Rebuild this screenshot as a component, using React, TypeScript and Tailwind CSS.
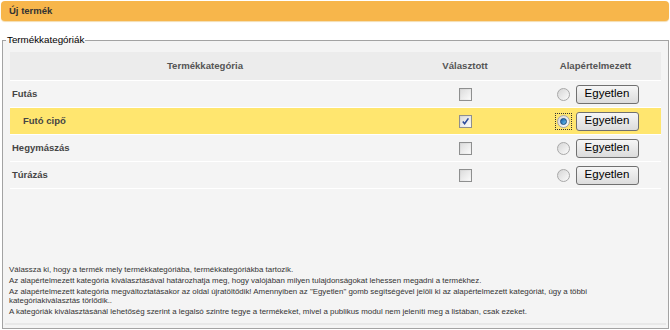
import React from "react";

type Row = { name: string; level: number; checked: boolean; def: boolean };

const rows: Row[] = [
  { name: "Futás", level: 0, checked: false, def: false },
  { name: "Futó cipő", level: 1, checked: true, def: true },
  { name: "Hegymászás", level: 0, checked: false, def: false },
  { name: "Túrázás", level: 0, checked: false, def: false },
];

function Checkbox({ checked }: { checked: boolean }) {
  return (
    <span className="relative inline-block w-[13px] h-[13px] border border-[#8e8f8f] bg-gradient-to-br from-[#d4d4d4] to-[#f7f7f7]">
      <span className="absolute inset-[1px] bg-gradient-to-br from-[#dedede] to-[#f9f9f9]" />
      {checked && (
        <svg className="absolute inset-0" width="11" height="11" viewBox="0 0 11 11">
          <path d="M2.8 5.6 L4.6 7.8 L8.4 2.4" fill="none" stroke="#2b4a9c" strokeWidth="1.6" />
        </svg>
      )}
    </span>
  );
}

function Radio({ checked }: { checked: boolean }) {
  const dot = (
    <span className="relative inline-flex items-center justify-center w-[13px] h-[13px] rounded-full border border-[#a8a8a8] bg-gradient-to-br from-[#d6d6d6] to-[#fbfbfb]">
      {checked && (
        <span className="w-[7px] h-[7px] rounded-full bg-gradient-to-br from-[#0f5ca8] to-[#6cc4f2] border border-[#17487c]" />
      )}
    </span>
  );
  if (checked) {
    return (
      <span className="inline-flex items-center justify-center w-[17px] h-[17px] border border-dotted border-[#333]">
        {dot}
      </span>
    );
  }
  return <span className="inline-flex items-center justify-center w-[17px] h-[17px]">{dot}</span>;
}

function Btn() {
  return (
    <span className="inline-flex items-center justify-center w-[63px] h-[19px] rounded-[3px] border border-[#707070] bg-gradient-to-b from-[#f6f6f6] to-[#dcdcdc] text-[11.5px] font-normal text-black leading-none">
      Egyetlen
    </span>
  );
}

export default function App() {
  return (
    <div className="w-[670px] h-[330px] bg-white font-['Liberation_Sans',Arial,sans-serif] overflow-hidden">
      <div className="mx-[1px] mt-[1px] h-[20px] rounded-[4px] bg-[#f7b64b] shadow-[0_1px_1px_#f3dcb0] px-[8px] flex items-center text-[9.5px] font-bold text-[#333]">
        Új termék
      </div>
      <fieldset className="mx-[2px] mt-[13px] h-[295px] border border-[#a3a3a3] bg-[#f4f4f4] flex flex-col">
        <legend className="ml-[3px] px-[1px] text-[9.8px] leading-[12px] text-black">Termékkategóriák</legend>
        <div className="mx-[7px] mt-[6px]">
          <div className="grid grid-cols-[390px_130px_131px] h-[28px] bg-[#ececec] items-center text-[9.6px] font-bold text-[#555]">
            <div className="text-center">Termékkategória</div>
            <div className="text-center">Választott</div>
            <div className="text-center">Alapértelmezett</div>
          </div>
          {rows.map((r) => (
            <div
              key={r.name}
              className={
                "grid grid-cols-[390px_130px_131px] h-[27px] items-center border-t border-white text-[9.5px] font-bold text-[#454545] " +
                (r.def ? "bg-[#ffe66f]" : "bg-[#f4f4f4]")
              }
            >
              <div className={r.level ? "pl-[13px]" : "pl-[2px]"}>{r.name}</div>
              <div className="flex justify-center pl-[1px]">
                <Checkbox checked={r.checked} />
              </div>
              <div className="flex items-center justify-center gap-[4px] pl-[2px]">
                <Radio checked={r.def} />
                <Btn />
              </div>
            </div>
          ))}
          <div className="h-[1px] bg-white" />
        </div>
        <div className="mt-auto mx-[2px] mb-[3px] pl-[4px] pr-[40px] pb-[6px] border-b-2 border-[#e8e8e8] text-[7.9px] leading-[10px] text-[#333]">
          <p>Válassza ki, hogy a termék mely termékkategóriába, termékkategóriákba tartozik.</p>
          <p className="mt-[1px]">Az alapértelmezett kategória kiválasztásával határozhatja meg, hogy valójában milyen tulajdonságokat lehessen megadni a termékhez.</p>
          <p className="mt-[1px] leading-[9px]">Az alapértelmezett kategória megváltoztatásakor az oldal újratöltődik! Amennyiben az "Egyetlen" gomb segítségével jelöli ki az alapértelmezett kategóriát, úgy a többi kategóriakiválasztás törlődik..</p>
          <p className="mt-[2px]">A kategóriák kiválasztásánál lehetőség szerint a legalsó szintre tegye a termékeket, mivel a publikus modul nem jeleníti meg a listában, csak ezeket.</p>
        </div>
      </fieldset>
    </div>
  );
}
